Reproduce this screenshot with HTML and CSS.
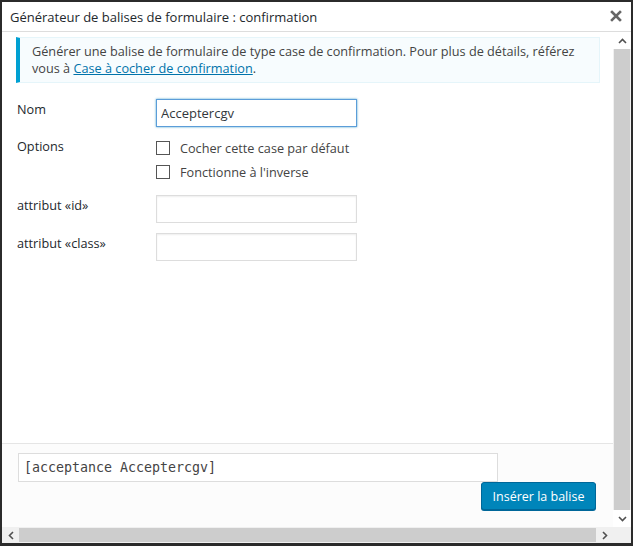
FILE: index.html
```html
<!DOCTYPE html>
<html lang="fr">
<head>
  <meta charset="UTF-8">
  <title>Générateur de balises de formulaire : confirmation</title>
  <link rel="stylesheet" href="styles.css">
</head>
<body>
  <div class="window">
    <div class="header">
      <h1 class="title">Générateur de balises de formulaire : confirmation</h1>
      <span class="close">
        <svg width="12" height="12" viewBox="0 0 12 12"><path d="M2 2 L10 10 M10 2 L2 10" stroke="#666" stroke-width="2.6" stroke-linecap="square"/></svg>
      </span>
    </div>

    <div class="scroll-area">
      <div class="content">
        <div class="main">
          <div class="notice">
            Générer une balise de formulaire de type case de confirmation. Pour plus de détails, référez vous à <a href="#">Case à cocher de confirmation</a>.
          </div>

          <div class="row row-name">
            <label class="label">Nom</label>
            <input type="text" class="field field-focus" value="Acceptercgv">
          </div>

          <div class="row row-options">
            <span class="label">Options</span>
            <div class="checks">
              <label class="check"><span class="box"></span>Cocher cette case par défaut</label>
              <label class="check"><span class="box"></span>Fonctionne à l'inverse</label>
            </div>
          </div>

          <div class="row row-id">
            <label class="label">attribut «id»</label>
            <input type="text" class="field">
          </div>

          <div class="row row-class">
            <label class="label">attribut «class»</label>
            <input type="text" class="field">
          </div>
        </div>

        <div class="footer">
          <input type="text" class="code" value="[acceptance Acceptercgv]" readonly>
          <div class="actions">
            <button class="insert">Insérer la balise</button>
          </div>
        </div>
      </div>

      <div class="vscroll">
        <span class="arrow">
          <svg width="9" height="6" viewBox="0 0 9 6"><path d="M1 5 L4.5 1.5 L8 5" fill="none" stroke="#505050" stroke-width="1.6"/></svg>
        </span>
        <span class="vthumb"></span>
        <span class="arrow">
          <svg width="9" height="6" viewBox="0 0 9 6"><path d="M1 1 L4.5 4.5 L8 1" fill="none" stroke="#505050" stroke-width="1.6"/></svg>
        </span>
      </div>

      <div class="hscroll">
        <span class="arrow">
          <svg width="6" height="9" viewBox="0 0 6 9"><path d="M5 1 L1.5 4.5 L5 8" fill="none" stroke="#505050" stroke-width="1.6"/></svg>
        </span>
        <span class="hthumb"></span>
        <span class="arrow">
          <svg width="6" height="9" viewBox="0 0 6 9"><path d="M1 1 L4.5 4.5 L1 8" fill="none" stroke="#505050" stroke-width="1.6"/></svg>
        </span>
      </div>
      <div class="corner"></div>
    </div>
  </div>
</body>
</html>
```

FILE: styles.css
```css
html, body {
  height: 100%;
}

body {
  background-color: #2b2b2b;
  margin: 0;
  padding: 2px 2px 3px 2px;
  box-sizing: border-box;
  font-family: 'Open Sans', sans-serif;
  font-size: 12.7px;
  color: #444;
}

.window {
  height: 100%;
  display: flex;
  flex-direction: column;
  background: #fff;
}

/* title bar */
.header {
  height: 29px;
  display: flex;
  align-items: center;
  justify-content: space-between;
  padding: 0 9px 0 8px;
  border-bottom: 1px solid #ddd;
  flex-shrink: 0;
}

.title {
  margin: 0;
  font-size: 13px;
  font-weight: normal;
  color: #23282d;
}

.close {
  display: flex;
  margin-top: -2px;
}

/* scrolling region */
.scroll-area {
  flex: 1;
  display: grid;
  grid-template-columns: 1fr 18px;
  grid-template-rows: 1fr 16px;
}

.content {
  display: flex;
  flex-direction: column;
}

.main {
  flex: 1;
  padding: 5px 13px 0 15px;
}

.notice {
  background: #f7fcfe;
  border: 1px solid #e5f5fa;
  border-left: 4px solid #00a0d2;
  padding: 5px 12px 5px 12px;
  line-height: 17px;
  margin-left: -1px;
}

.notice a {
  color: #0073aa;
}

.row {
  display: grid;
  grid-template-columns: 139px 201px;
  align-items: start;
}

.label {
  color: #23282d;
  line-height: 18px;
  padding-top: 1px;
}

.row-name {
  margin-top: 16px;
}

.row-options {
  margin-top: 10px;
}

.row-options .label {
  padding-top: 0;
}

.row-id {
  margin-top: 14px;
}

.row-class {
  margin-top: 10px;
}

.field {
  height: 28px;
  box-sizing: border-box;
  border: 1px solid #ddd;
  box-shadow: inset 0 1px 2px rgba(0,0,0,0.07);
  font-family: 'Open Sans', sans-serif;
  font-size: 13px;
  color: #32373c;
  padding: 0 4px;
  margin: 0;
}

.field-focus {
  border-color: #5b9dd9;
  box-shadow: 0 0 2px rgba(30,140,190,0.8);
}

.checks {
  display: flex;
  flex-direction: column;
  gap: 6px;
  padding-top: 2px;
}

.check {
  display: flex;
  align-items: center;
  gap: 10px;
  line-height: 18px;
  white-space: nowrap;
}

.box {
  width: 12px;
  height: 12px;
  border: 1px solid #555;
  background: #fff;
  flex-shrink: 0;
}

/* bottom bar */
.footer {
  height: 84px;
  box-sizing: border-box;
  background: #fcfcfc;
  border-top: 1px solid #e5e5e5;
  padding: 9px 17px 0 16px;
}

.code {
  width: 480px;
  height: 29px;
  box-sizing: border-box;
  border: 1px solid #ddd;
  background: #fff;
  font-family: 'DejaVu Sans Mono', monospace;
  font-size: 13.3px;
  color: #444;
  padding: 0 5px;
  margin: 0;
  display: block;
}

.actions {
  display: flex;
  justify-content: flex-end;
}

.insert {
  height: 28px;
  width: 115px;
  background-color: #0085ba;
  border: 1px solid #006799;
  border-radius: 3px;
  box-shadow: 0 1px 0 #006799;
  color: white;
  font-family: 'Open Sans', sans-serif;
  font-size: 12.5px;
  cursor: pointer;
  padding: 0;
}

/* fake scrollbars */
.vscroll {
  display: flex;
  flex-direction: column;
  background: #f0f0f0;
}

.vthumb {
  flex: 1;
  background: #cdcdcd;
  margin: 0 1px;
}

.vscroll .arrow {
  height: 17px;
  display: flex;
  align-items: center;
  justify-content: center;
  background: #fff;
}

.hscroll {
  display: flex;
  background: #f0f0f0;
}

.hscroll .arrow {
  width: 17px;
  display: flex;
  align-items: center;
  justify-content: center;
  background: #f0f0f0;
}

.hthumb {
  flex: 1;
  background: #cdcdcd;
  margin: 1px 0;
}

.corner {
  background: #f0f0f0;
}
```
